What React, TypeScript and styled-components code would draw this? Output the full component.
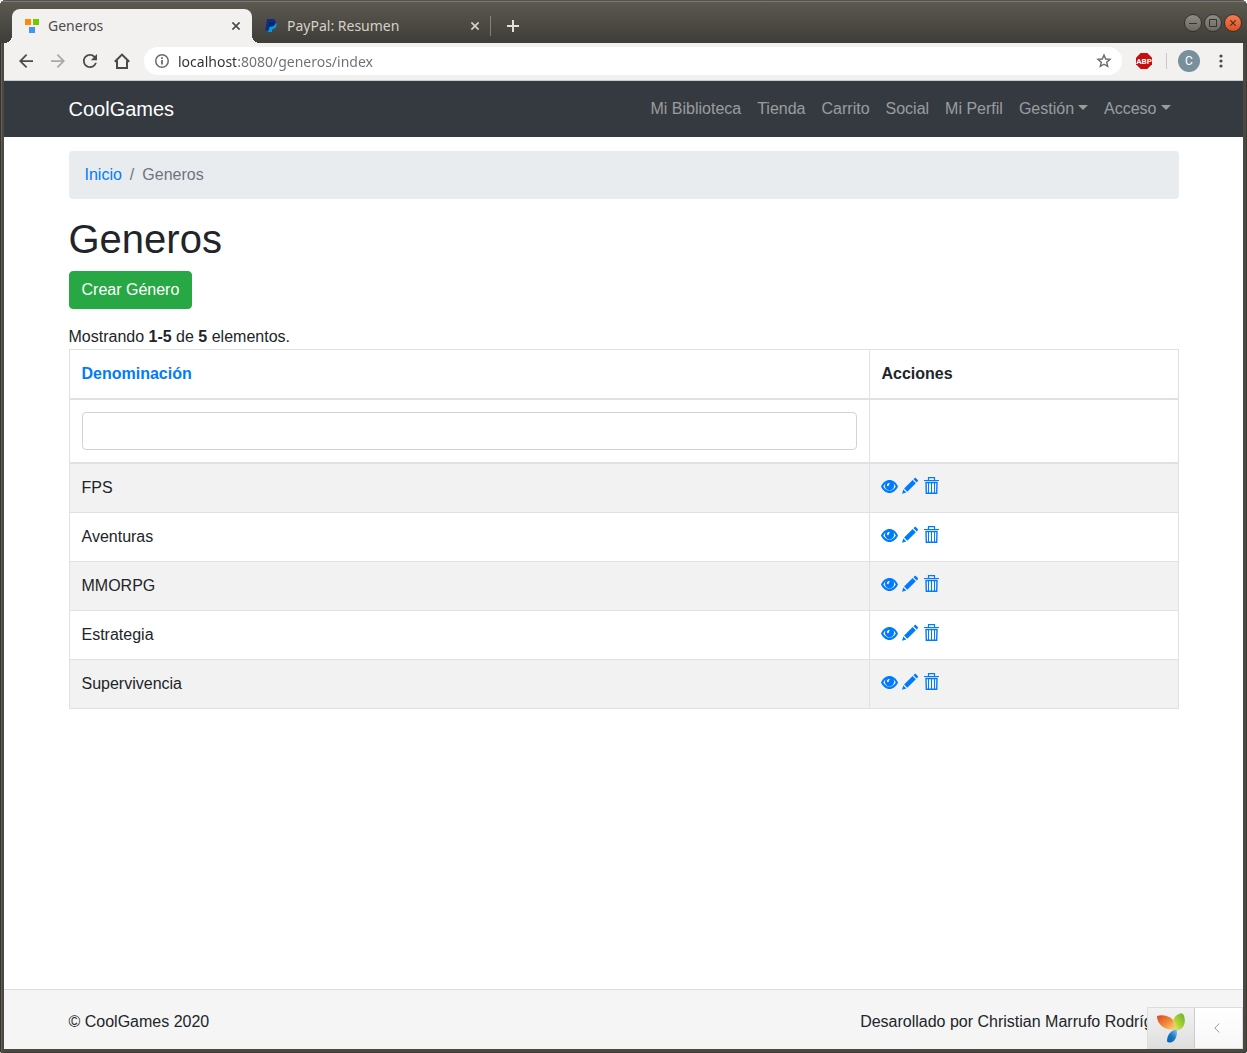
import React from 'react';
import styled, { createGlobalStyle } from 'styled-components';

const GlobalStyle = createGlobalStyle`
  *, *::before, *::after { box-sizing: border-box; }
  body {
    margin: 0;
    background: #fff;
    color: #212529;
    font: 400 16px/24px "Liberation Sans", Arial, sans-serif;
  }
  a { color: #007bff; text-decoration: none; }
  button, input { font: inherit; }
  svg { display: block; flex: none; }
`;

/* ---------- window frame ---------- */

const Frame = styled.div`
  display: flex;
  flex-direction: column;
  min-height: 100vh;
  padding: 0 4px 4px;
  background: #4b4840;
  border-radius: 6px 6px 3px 3px;
  box-shadow: inset 1px 0 #35342f, inset 2px 0 #62605a, inset -1px -1px #3c3b36;
  overflow: hidden;
`;

const TabStrip = styled.div`
  display: flex;
  align-items: flex-end;
  height: 43px;
  margin: 0 -4px;
  padding: 0 5px 0 12px;
  background: linear-gradient(#5d5a51, #3e3d38);
  box-shadow: inset 0 1px #54534f, inset 0 2px #7a7974;
`;

const Tab = styled.div<{ $active?: boolean }>`
  position: relative;
  display: flex;
  align-items: center;
  width: ${p => (p.$active ? 240 : 239)}px;
  height: 34px;
  padding: 0 10px 0 13px;
  border-radius: 8px 8px 0 0;
  background: ${p => (p.$active ? '#f2f1f0' : 'transparent')};
  color: ${p => (p.$active ? '#4c4c4c' : '#d5d0c8')};
  font: 14px/20px "Noto Sans", "Open Sans", sans-serif;

  &::before, &::after {
    content: ${p => (p.$active ? '""' : 'none')};
    position: absolute;
    bottom: 0;
    width: 8px;
    height: 8px;
  }
  &::before {
    left: -8px;
    background: radial-gradient(circle at 0 0, transparent 8px, #f2f1f0 8px);
  }
  &::after {
    right: -8px;
    background: radial-gradient(circle at 100% 0, transparent 8px, #f2f1f0 8px);
  }
`;

const TabTitle = styled.span<{ $indent: number }>`
  flex: 1;
  padding-left: ${p => p.$indent}px;
  white-space: nowrap;
`;

const BareButton = styled.button<{ $width: number }>`
  display: flex;
  align-items: center;
  justify-content: center;
  flex: none;
  width: ${p => p.$width}px;
  height: 32px;
  padding: 0;
  border: 0;
  background: none;
  color: inherit;

  &:disabled { color: #a9a9a8; }
`;

const NewTab = styled.div`
  display: flex;
  align-items: center;
  height: 34px;
  margin-left: -1px;
  color: #e4e0d8;
`;

const Divider = styled.span<{ $height: number; $color: string }>`
  flex: none;
  width: 1px;
  height: ${p => p.$height}px;
  background: ${p => p.$color};
`;

const WindowButtons = styled.div`
  display: flex;
  gap: 2px;
  margin: 0 0 11px auto;
`;

const WindowButton = styled.button<{ $close?: boolean }>`
  display: flex;
  align-items: center;
  justify-content: center;
  width: 18px;
  height: 18px;
  padding: 0;
  border: 1px solid #33322e;
  border-radius: 50%;
  background: ${p => (p.$close ? 'linear-gradient(#f47c54, #e2501f)' : 'linear-gradient(#8d8b83, #6b6962)')};
  color: #35342f;
`;

const Toolbar = styled.div`
  display: flex;
  align-items: center;
  height: 38px;
  padding: 0 12px 1px 6px;
  border-bottom: 1px solid #c4cfcb;
  background: #f2f1f0;
  color: #4a4a4a;
`;

const AddressBar = styled.div`
  display: flex;
  align-items: center;
  flex: 1;
  height: 28px;
  margin-left: 6px;
  padding: 0 2px;
  border-radius: 14px;
  background: #fff;
  color: #6a6a6a;
`;

const AddressInput = styled.input`
  flex: 1;
  min-width: 0;
  height: 28px;
  padding: 0;
  border: 0;
  outline: 0;
  color: #6b6e72;
  background: linear-gradient(90deg, #2f3033 58px, #6b6e72 58px);
  -webkit-background-clip: text;
  background-clip: text;
  -webkit-text-fill-color: transparent;
  font: 14px/20px "Noto Sans", "Open Sans", sans-serif;
`;

const Avatar = styled.span`
  width: 22px;
  height: 22px;
  border-radius: 50%;
  background: #78909c;
  color: #fff;
  font: 12px/22px Roboto, sans-serif;
  text-align: center;
`;

/* ---------- web page ---------- */

const Page = styled.div`
  position: relative;
  display: flex;
  flex: 1;
  flex-direction: column;
  background: #fff;
`;

const Container = styled.div`
  width: 100%;
  max-width: 1140px;
  margin: 0 auto;
  padding: 0 15px;
`;

const Bar = styled(Container)`
  display: flex;
  align-items: center;
  justify-content: space-between;
`;

const Navbar = styled.nav`
  padding: 8px 0;
  background: #343a40;
`;

const Brand = styled.a`
  color: #fff;
  font-size: 20px;
  line-height: 30px;
`;

const NavList = styled.ul`
  display: flex;
  margin: 0;
  padding: 0;
  list-style: none;
`;

const NavLink = styled.a<{ $dropdown?: boolean }>`
  display: block;
  padding: 8px;
  color: rgba(255, 255, 255, 0.5);
  white-space: nowrap;

  &::after {
    content: ${p => (p.$dropdown ? '""' : 'none')};
    display: inline-block;
    margin-left: 4px;
    vertical-align: 4px;
    border: 5px solid transparent;
    border-top-color: currentColor;
    border-bottom: 0;
  }
`;

const Main = styled.main`
  flex: 1;
  padding: 14px 0 20px;
`;

const Breadcrumb = styled.ol`
  display: flex;
  margin: 0 0 16px;
  padding: 12px 16px;
  border-radius: 4px;
  background: #e9ecef;
  color: #6c757d;
  list-style: none;

  li + li::before {
    content: "/";
    padding: 0 8px;
  }
`;

const Title = styled.h1`
  margin: 0 0 8px;
  font-size: 40px;
  font-weight: 400;
  line-height: 48px;
`;

const CreateButton = styled.button`
  display: block;
  margin: 0 0 16px;
  padding: 6px 12px;
  border: 1px solid #28a745;
  border-radius: 4px;
  background: #28a745;
  color: #fff;
  line-height: 24px;
`;

const Grid = styled.table`
  width: 100%;
  border: 1px solid #dee2e6;
  border-collapse: collapse;
`;

const Head = styled.thead`
  th, td { border-bottom-width: 2px; }
`;

const cell = `
  padding: 12px;
  border: 1px solid #dee2e6;
  text-align: left;
  vertical-align: top;
`;

const HeadCell = styled.th<{ $width?: number }>`
  ${cell}
  width: ${p => (p.$width ? `${p.$width}px` : 'auto')};
`;

const Cell = styled.td`${cell}`;

const Row = styled.tr`
  &:nth-child(odd) { background: #f2f2f2; }
`;

const Filter = styled.input`
  display: block;
  width: 100%;
  height: 38px;
  padding: 6px 12px;
  border: 1px solid #ced4da;
  border-radius: 4px;
  background: #fff;
  color: #495057;
`;

const Actions = styled.div`
  display: flex;
  align-items: flex-start;
  gap: 4px;
  height: 20px;
  margin-left: -1px;
`;

const Footer = styled.footer`
  padding: 20px 0 15px;
  border-top: 1px solid #ddd;
  background: #f5f5f5;
`;

const DebugBar = styled.div`
  position: absolute;
  right: 0;
  bottom: 0;
  display: flex;
  width: 96px;
  height: 42px;
  border: 1px solid #ddd;
  background: #fff;
`;

const DebugLogo = styled.a`
  display: flex;
  align-items: center;
  justify-content: center;
  width: 47px;
  border-right: 1px solid #ccc;
  background: linear-gradient(#f2f2f2, #dfdfdf);
`;

const DebugToggle = styled.button`
  display: flex;
  align-items: center;
  justify-content: center;
  flex: 1;
  padding: 0 3px 0 0;
  border: 0;
  background: linear-gradient(#fff, #f7f7f7);
  color: #999;
`;

/* ---------- drawings ---------- */

const Cross = ({ size = 8, weight = 1.7 }: { size?: number; weight?: number }) => (
  <svg width={size} height={size} viewBox="0 0 8 8" stroke="currentColor" strokeWidth={weight}>
    <path d="M.4.4l7.200 7.200M7.600.4L.4 7.600" />
  </svg>
);

const Favicon = () => (
  <svg width="14" height="14" viewBox="0 0 14 14">
    <path fill="#ff8c00" d="M0 0h6v6H0z" />
    <path fill="#73c800" d="M8 0h6v6H8z" />
    <path fill="#4197f0" d="M4 8h6v6H4z" />
  </svg>
);

const PayPalIcon = () => (
  <svg width="12" height="14" viewBox="0 0 12 14">
    <path fill="#009cde" d="M4 4h7c.8 1 .7 2.500.1 3.800C10.400 9.500 9 10 7.500 10L6.800 13H3z" />
    <path fill="#0b2f83" d="M2 0h5.500C10 0 11 1.500 10.500 4 10 6.500 8.300 7.500 6 7.500H4.700L3.800 11.500H.2z" />
    <path fill="#012169" d="M4.500 3.500h5.900C10 6.300 8.300 7.500 6 7.500H3.700z" />
  </svg>
);

const Plus = () => (
  <svg width="12" height="12" viewBox="0 0 12 12" stroke="currentColor" strokeWidth="2">
    <path d="M6 0v12M0 6h12" />
  </svg>
);

const Material = ({ d }: { d: string }) => (
  <svg width="14" height="14" viewBox="4 4 16 16" fill="currentColor"><path d={d} /></svg>
);

const BACK = 'M20 11H7.830l5.590-5.590L12 4l-8 8 8 8 1.410-1.410L7.830 13H20v-2z';
const FORWARD = 'M12 4l-1.410 1.410L16.170 11H4v2h12.170l-5.580 5.590L12 20l8-8z';
const RELOAD =
  'M17.650 6.350C16.200 4.900 14.210 4 12 4c-4.420 0-7.990 3.580-7.990 8s3.570 8 7.990 8c3.730 0 6.840-2.550 7.730-6h-2.080c-.82 2.330-3.040 4-5.650 4-3.310 0-6-2.690-6-6s2.690-6 6-6c1.660 0 3.140.69 4.220 1.780L13 11h7V4l-2.350 2.350z';

const Home = () => (
  <svg width="16" height="16" viewBox="0 0 16 16" fill="none" stroke="currentColor" strokeWidth="2">
    <path d="M.8 8.800L8 1.600l7.200 7.200M3 7.500V15h10V7.500" />
  </svg>
);

const Info = () => (
  <svg width="14" height="14" viewBox="0 0 14 14" fill="none" stroke="currentColor">
    <circle cx="7" cy="7" r="6.250" strokeWidth="1.500" />
    <path strokeWidth="1.800" d="M7 6v4.500M7 3.300v1.700" />
  </svg>
);

const Star = () => (
  <svg width="16" height="16" viewBox="0 0 16 16" fill="none" stroke="currentColor" strokeWidth="1.400">
    <path d="M8 2l1.700 4 4.300.4-3.300 2.800 1 4.200L8 11.200l-3.700 2.200 1-4.200L2 6.400 6.300 6z" />
  </svg>
);

const AdBlock = () => (
  <svg width="16" height="16" viewBox="0 0 16 16">
    <path fill="#c70d0d" d="M4.700 0h6.600L16 4.700v6.600L11.300 16H4.700L0 11.300V4.700z" />
    <text x="8" y="11" fill="#fff" textAnchor="middle" fontFamily="Roboto, sans-serif" fontWeight="700" fontSize="8">ABP</text>
  </svg>
);

const Dots = () => (
  <svg width="4" height="14" viewBox="0 0 4 14" fill="currentColor">
    <circle cx="2" cy="2" r="1.600" /><circle cx="2" cy="7" r="1.600" /><circle cx="2" cy="12" r="1.600" />
  </svg>
);

const Eye = () => (
  <svg width="17" height="18" viewBox="0 0 17 18" fill="currentColor">
    <path
      fillRule="evenodd"
      d="M0 10.500C1.800 6.300 5 4 8.500 4s6.700 2.300 8.500 6.500C15.200 14.600 12 17 8.500 17S1.800 14.600 0 10.500zM2.300 10.500c1.500 2.600 3.700 4.300 6.200 4.300s4.700-1.700 6.200-4.300c-.6-1.300-1.400-2.400-2.400-3.200.5.700.8 1.600.8 2.500a4.600 4.600 0 0 1-9.200 0c0-.9.3-1.800.8-2.500-1 .8-1.800 1.900-2.400 3.200zM7.200 7.200c-1 .5-1.400 1.400-1.200 2.300.1.600.6.900 1.100.8.600-.1.700-.7.700-1.200 0-.4.200-.6.600-.8.400-.2.400-.7.100-1-.3-.3-.8-.3-1.300-.1z"
    />
  </svg>
);

const Pencil = () => (
  <svg width="17" height="18" viewBox="0 0 17 18" fill="currentColor">
    <path d="M0 17.800l1.300-4.300 3 3zM2.100 12.600l8.500-8.500 3.200 3.200-8.500 8.500zM11.500 3.200l1.100-1.100c.4-.4.800-.4 1.200 0l2 2c.4.400.4.800 0 1.200l-1.100 1.100z" />
  </svg>
);

const Trash = () => (
  <svg width="17" height="18" viewBox="0 0 17 18" fill="none" stroke="currentColor">
    <path strokeWidth="1.200" d="M5.500 4V1.600h6V4" />
    <path d="M1 4.500h15" />
    <path strokeWidth="1.400" d="M3 6.500h11L13.700 17.300H3.300z" />
    <path d="M5.500 7v10M8.500 7v10M11.500 7v10" />
  </svg>
);

const YiiLogo = () => (
  <svg width="28" height="30" viewBox="0 0 28 30">
    <defs>
      <linearGradient id="leaf-orange" x1="0" y1="0" x2="1" y2="1">
        <stop offset="0" stopColor="#d9451f" /><stop offset=".5" stopColor="#f08a3c" /><stop offset="1" stopColor="#fde58a" />
      </linearGradient>
      <linearGradient id="leaf-green" x1="1" y1="0" x2="0" y2="1">
        <stop offset="0" stopColor="#5fb336" /><stop offset=".6" stopColor="#b5d334" /><stop offset="1" stopColor="#f0f09a" />
      </linearGradient>
      <linearGradient id="leaf-blue" x1="1" y1="0" x2="0" y2="1">
        <stop offset="0" stopColor="#8cc8e8" /><stop offset=".5" stopColor="#1679c5" /><stop offset="1" stopColor="#0a5ca8" />
      </linearGradient>
    </defs>
    <path fill="url(#leaf-orange)" d="M0 3C5 1 12.500 2.500 16 7c2.500 3.300 3 6 4 10.500C15 16.500 10.500 17 6 14 2 11.300 0 7.500 0 3z" />
    <path fill="url(#leaf-green)" d="M24.500.300C20 1 15.500 4.500 16.300 10c.3 2.500 1.800 4 3.700 7.500 4.500-.5 7.500-4.500 7.800-9C28 5 27 .600 24.500.300z" />
    <path fill="url(#leaf-blue)" d="M19.800 16.500c-5 .5-9.800 4.500-9.800 12 1.500 1.500 5 1.300 7-.8 2.500-2.700 3.500-6.500 2.800-11.200z" />
  </svg>
);

const Chevron = () => (
  <svg width="6" height="10" viewBox="0 0 6 10" fill="none" stroke="currentColor">
    <path d="M5.300.500L.800 5l4.500 4.500" />
  </svg>
);

/* ---------- content ---------- */

const NAV = [
  { label: 'Mi Biblioteca' },
  { label: 'Tienda' },
  { label: 'Carrito' },
  { label: 'Social' },
  { label: 'Mi Perfil' },
  { label: 'Gestión', dropdown: true },
  { label: 'Acceso', dropdown: true },
];

const GENRES = ['FPS', 'Aventuras', 'MMORPG', 'Estrategia', 'Supervivencia'];

export default function App() {
  return (
    <>
      <GlobalStyle />
      <Frame>
        <TabStrip>
          <Tab $active>
            <Favicon />
            <TabTitle $indent={9}>Generos</TabTitle>
            <BareButton $width={12} aria-label="Cerrar Generos"><Cross /></BareButton>
          </Tab>
          <Tab>
            <PayPalIcon />
            <TabTitle $indent={10}>PayPal: Resumen</TabTitle>
            <BareButton $width={12} aria-label="Cerrar PayPal"><Cross /></BareButton>
          </Tab>
          <NewTab>
            <Divider $height={20} $color="#85827a" />
            <BareButton $width={44} aria-label="Nueva pestaña"><Plus /></BareButton>
          </NewTab>
          <WindowButtons>
            <WindowButton aria-label="Minimizar">
              <svg width="8" height="8" stroke="currentColor"><path d="M0 4.500h8" /></svg>
            </WindowButton>
            <WindowButton aria-label="Maximizar">
              <svg width="8" height="8" fill="none" stroke="currentColor"><path d="M.5.500h7v7h-7z" /></svg>
            </WindowButton>
            <WindowButton $close aria-label="Cerrar"><Cross size={6} weight={1.5} /></WindowButton>
          </WindowButtons>
        </TabStrip>

        <Toolbar>
          <BareButton $width={32} aria-label="Atrás"><Material d={BACK} /></BareButton>
          <BareButton $width={32} aria-label="Adelante" disabled><Material d={FORWARD} /></BareButton>
          <BareButton $width={32} aria-label="Recargar"><Material d={RELOAD} /></BareButton>
          <BareButton $width={32} aria-label="Inicio"><Home /></BareButton>
          <AddressBar>
            <BareButton $width={32} aria-label="Información del sitio"><Info /></BareButton>
            <AddressInput aria-label="Dirección" defaultValue="localhost:8080/generos/index" />
            <BareButton $width={32} aria-label="Añadir a marcadores"><Star /></BareButton>
          </AddressBar>
          <BareButton $width={44} aria-label="Adblock Plus"><AdBlock /></BareButton>
          <Divider $height={16} $color="#c8c8c8" />
          <BareButton $width={44} aria-label="Perfil"><Avatar>C</Avatar></BareButton>
          <BareButton $width={20} aria-label="Menú"><Dots /></BareButton>
        </Toolbar>

        <Page>
          <Navbar>
            <Bar>
              <Brand href="#">CoolGames</Brand>
              <NavList>
                {NAV.map(item => (
                  <li key={item.label}>
                    <NavLink href="#" $dropdown={item.dropdown}>{item.label}</NavLink>
                  </li>
                ))}
              </NavList>
            </Bar>
          </Navbar>

          <Main>
            <Container>
              <Breadcrumb>
                <li><a href="#">Inicio</a></li>
                <li>Generos</li>
              </Breadcrumb>
              <Title>Generos</Title>
              <CreateButton type="button">Crear Género</CreateButton>
              <div>Mostrando <b>1-5</b> de <b>5</b> elementos.</div>
              <Grid>
                <Head>
                  <tr>
                    <HeadCell><a href="#">Denominación</a></HeadCell>
                    <HeadCell $width={309}>Acciones</HeadCell>
                  </tr>
                  <tr>
                    <Cell><Filter type="text" aria-label="Denominación" /></Cell>
                    <Cell />
                  </tr>
                </Head>
                <tbody>
                  {GENRES.map(name => (
                    <Row key={name}>
                      <Cell>{name}</Cell>
                      <Cell>
                        <Actions>
                          <a href="#" aria-label={`Ver ${name}`}><Eye /></a>
                          <a href="#" aria-label={`Editar ${name}`}><Pencil /></a>
                          <a href="#" aria-label={`Eliminar ${name}`}><Trash /></a>
                        </Actions>
                      </Cell>
                    </Row>
                  ))}
                </tbody>
              </Grid>
            </Container>
          </Main>

          <Footer>
            <Bar>
              <span>© CoolGames 2020</span>
              <span>Desarollado por Christian Marrufo Rodríguez</span>
            </Bar>
          </Footer>

          <DebugBar>
            <DebugLogo href="#" aria-label="Yii Debugger"><YiiLogo /></DebugLogo>
            <DebugToggle type="button" aria-label="Abrir barra"><Chevron /></DebugToggle>
          </DebugBar>
        </Page>
      </Frame>
    </>
  );
}
